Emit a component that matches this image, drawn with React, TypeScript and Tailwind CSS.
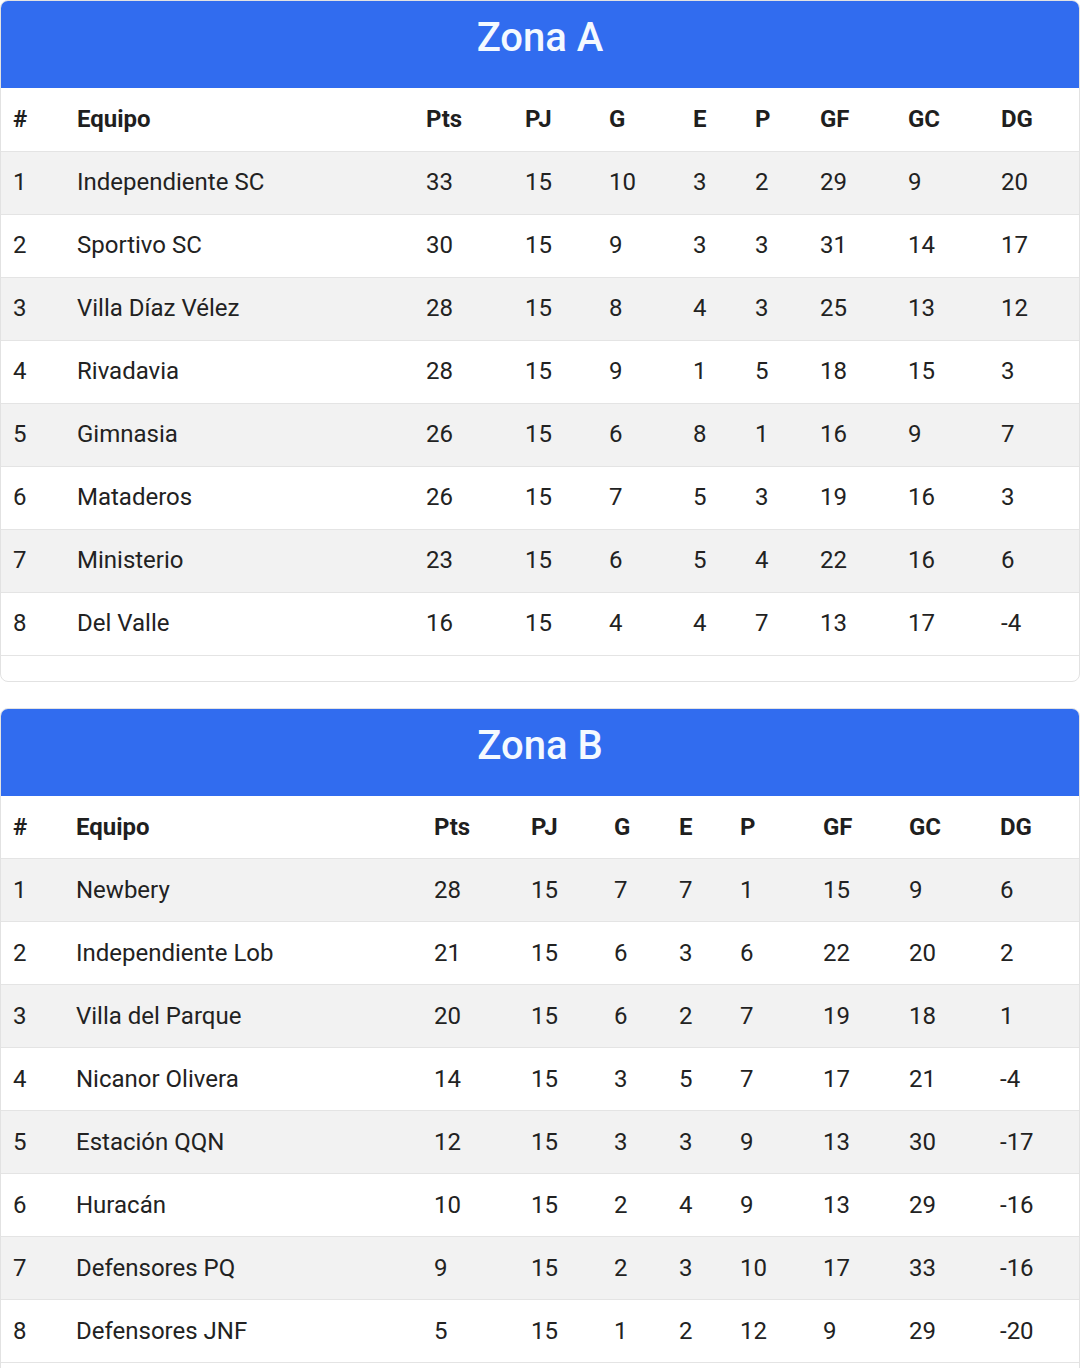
import React from "react";

type Row = [number, string, number, number, number, number, number, number, number, number];

const HEADERS = ["#", "Equipo", "Pts", "PJ", "G", "E", "P", "GF", "GC", "DG"];

const ZONA_A: Row[] = [
  [1, "Independiente SC", 33, 15, 10, 3, 2, 29, 9, 20],
  [2, "Sportivo SC", 30, 15, 9, 3, 3, 31, 14, 17],
  [3, "Villa Díaz Vélez", 28, 15, 8, 4, 3, 25, 13, 12],
  [4, "Rivadavia", 28, 15, 9, 1, 5, 18, 15, 3],
  [5, "Gimnasia", 26, 15, 6, 8, 1, 16, 9, 7],
  [6, "Mataderos", 26, 15, 7, 5, 3, 19, 16, 3],
  [7, "Ministerio", 23, 15, 6, 5, 4, 22, 16, 6],
  [8, "Del Valle", 16, 15, 4, 4, 7, 13, 17, -4],
];

const ZONA_B: Row[] = [
  [1, "Newbery", 28, 15, 7, 7, 1, 15, 9, 6],
  [2, "Independiente Lob", 21, 15, 6, 3, 6, 22, 20, 2],
  [3, "Villa del Parque", 20, 15, 6, 2, 7, 19, 18, 1],
  [4, "Nicanor Olivera", 14, 15, 3, 5, 7, 17, 21, -4],
  [5, "Estación QQN", 12, 15, 3, 3, 9, 13, 30, -17],
  [6, "Huracán", 10, 15, 2, 4, 9, 13, 29, -16],
  [7, "Defensores PQ", 9, 15, 2, 3, 10, 17, 33, -16],
  [8, "Defensores JNF", 5, 15, 1, 2, 12, 9, 29, -20],
];

// column widths measured off the auto layout of each table
const COLS_A = [64, 349, 99, 84, 84, 62, 65, 88, 93, 92];
const COLS_B = [63, 358, 97, 83, 65, 61, 83, 86, 91, 93];

function ZoneCard({ title, rows, cols }: { title: string; rows: Row[]; cols: number[] }) {
  return (
    <div className="shrink-0 overflow-hidden rounded-lg border border-[#e2e2e2] bg-white pb-[25px]">
      <div className="flex h-[87px] justify-center bg-[#316cef] pt-[17px]">
        <h2 className="text-[40px] font-medium leading-none text-[#f4f9ff]">{title}</h2>
      </div>
      <table className="w-full table-fixed border-collapse text-[24px] text-[#222]">
        <colgroup>
          {cols.map((w, i) => (
            <col key={i} style={{ width: w }} />
          ))}
        </colgroup>
        <thead>
          <tr className="h-[63px] border-b border-[#e4e4e4]">
            {HEADERS.map((h) => (
              <th key={h} className="pl-3 text-left font-bold text-[#1f1f1f]">
                {h}
              </th>
            ))}
          </tr>
        </thead>
        <tbody>
          {rows.map((r, i) => (
            <tr
              key={r[0]}
              className={`h-[63px] border-b border-[#e4e4e4] ${i % 2 === 0 ? "bg-[#f2f2f2]" : "bg-white"}`}
            >
              {r.map((v, j) => (
                <td key={j} className="whitespace-nowrap pb-[1px] pl-3 text-left">
                  {v}
                </td>
              ))}
            </tr>
          ))}
        </tbody>
      </table>
    </div>
  );
}

export default function App() {
  return (
    <div
      className="flex h-[1368px] flex-col gap-[26px] overflow-hidden bg-white"
      style={{ fontFamily: "Roboto, 'Noto Sans', sans-serif" }}
    >
      <ZoneCard title="Zona A" rows={ZONA_A} cols={COLS_A} />
      <ZoneCard title="Zona B" rows={ZONA_B} cols={COLS_B} />
    </div>
  );
}
